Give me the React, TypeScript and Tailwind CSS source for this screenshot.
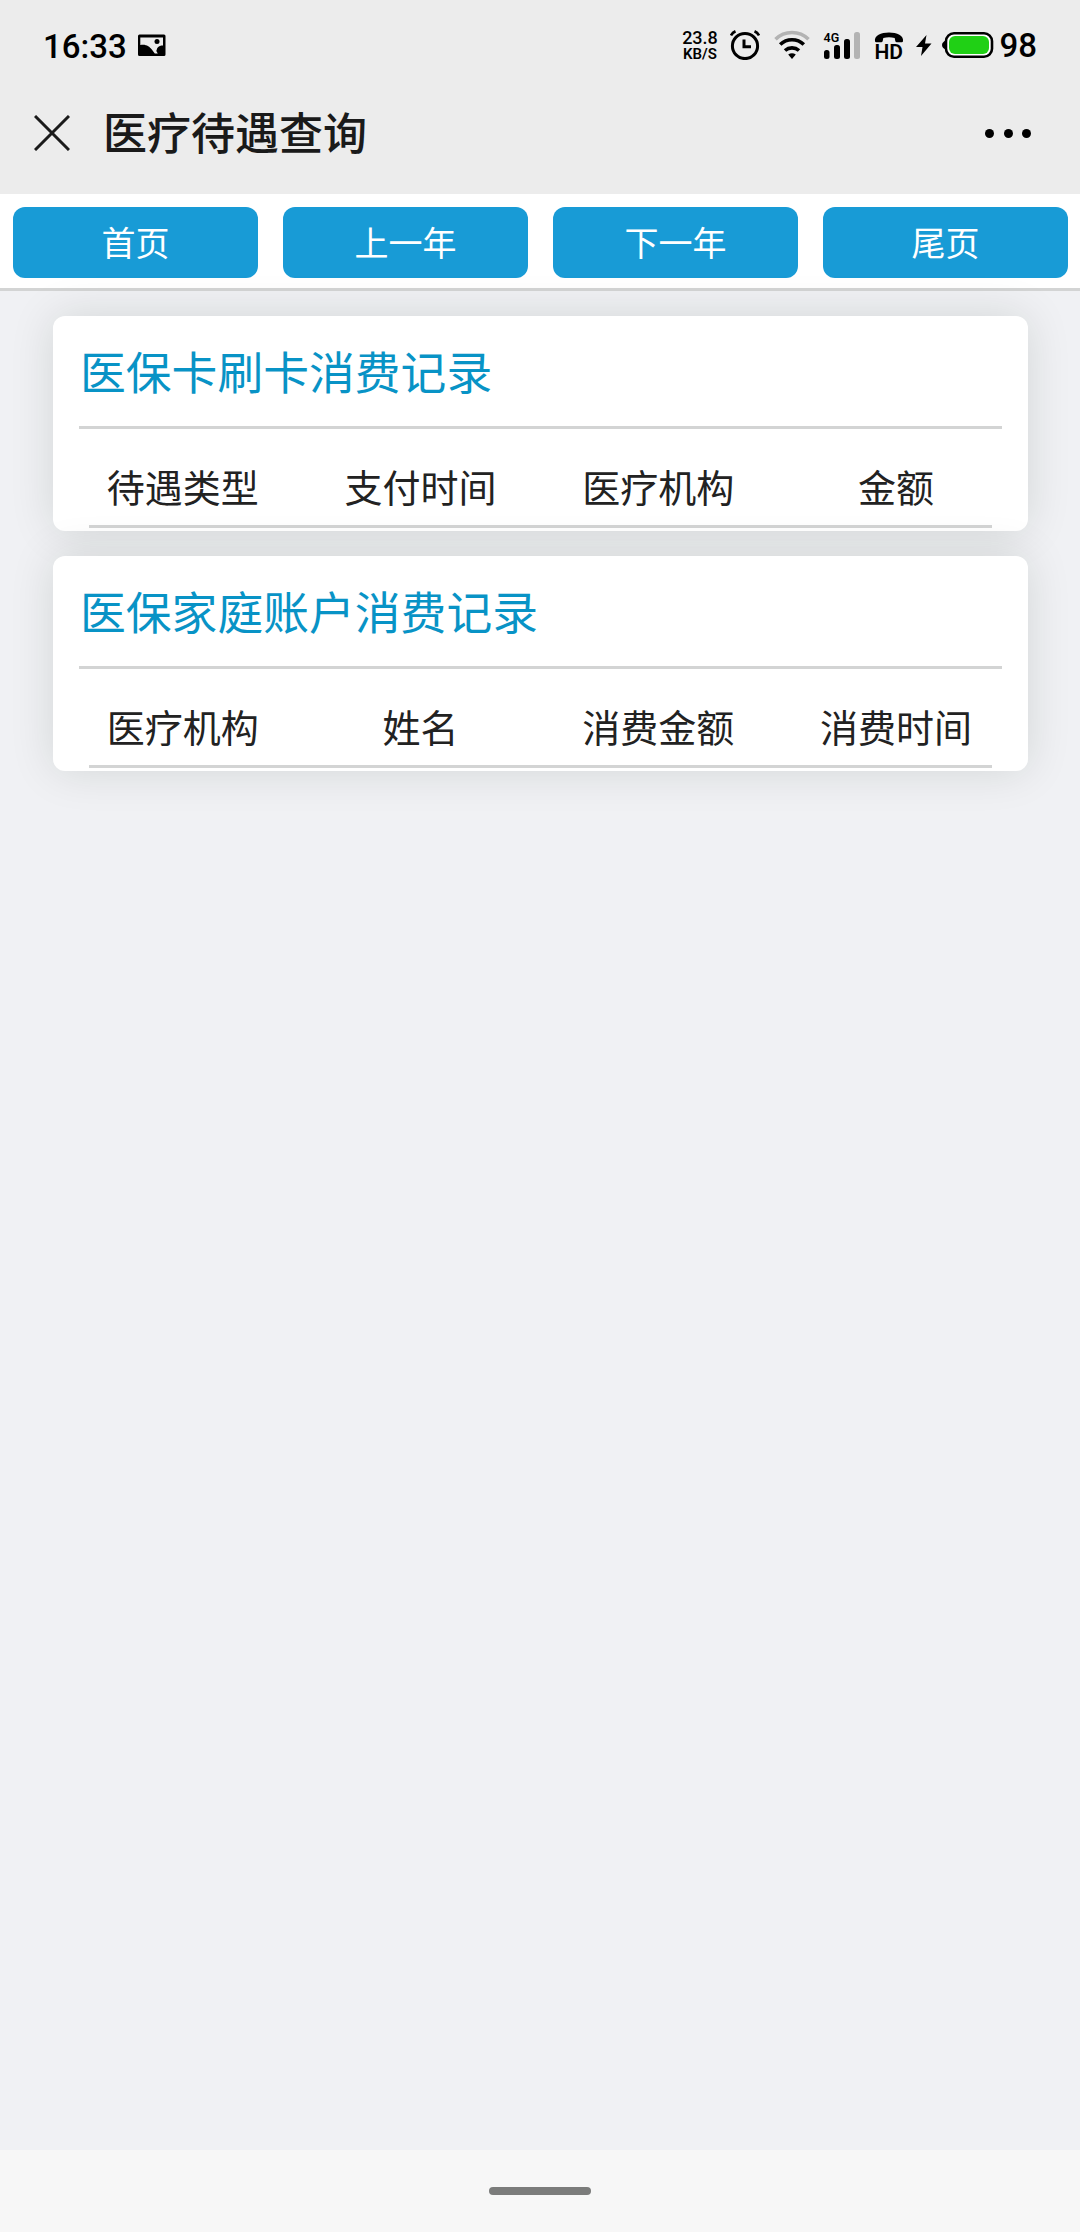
'use client';

interface RecordCardProps {
  title: string;
  columns: string[];
}

const navButtons = ['首页', '上一年', '下一年', '尾页'];

const records: RecordCardProps[] = [
  { title: '医保卡刷卡消费记录', columns: ['待遇类型', '支付时间', '医疗机构', '金额'] },
  { title: '医保家庭账户消费记录', columns: ['医疗机构', '姓名', '消费金额', '消费时间'] },
];

function StatusBar() {
  return (
    <div className="flex h-[90px] items-center justify-between pl-[43px] pr-[43px] font-['Roboto',sans-serif] text-black">
      <div className="flex items-center">
        <span className="w-[95px] pt-[3px] text-[33px] leading-[40px] font-medium">16:33</span>
        <svg width="28" height="23" viewBox="0 0 28 23" className="mt-px">
          <path
            fillRule="evenodd"
            d="M1.5 0.5h24.500a1.500 1.500 0 0 1 1.500 1.500v18.500a1.500 1.500 0 0 1-1.500 1.500h-24.500a1.500 1.500 0 0 1-1.500-1.500v-18.500a1.500 1.500 0 0 1 1.500-1.500zM2.300 3.500v7.500c6-1 9 1.500 11.500 4.500l3 4h3l-1.500-2.500 1-3c1.500-2 3.500-2.500 5.700-2.500v-8z"
          />
          <circle cx="19" cy="7.500" r="2.500" />
        </svg>
      </div>

      <div className="flex items-center">
        <div className="flex w-[37px] flex-col items-center pt-px">
          <span className="text-[18px] leading-[18px] font-medium">23.8</span>
          <span className="text-[15px] leading-[15px] font-semibold whitespace-nowrap">KB/S</span>
        </div>

        {/* Alarm */}
        <svg width="30" height="30" viewBox="0 0 30 30" className="ml-[12px]" fill="none" stroke="#000">
          <circle cx="15" cy="16" r="12.600" strokeWidth="3" />
          <path d="M14 9.500v7.200h7" strokeWidth="3" />
          <path d="M1 5.500q1.500-3 4.500-4.300M29 5.500q-1.500-3-4.500-4.300" strokeWidth="2.600" />
        </svg>

        {/* Wifi */}
        <svg width="36" height="30" viewBox="0 0 36 30" className="ml-[14px]" fill="none" stroke="#000" strokeWidth="3.600">
          <path d="M1.500 9.300a23.500 23.500 0 0 1 33 0" stroke="#b3b3b3" />
          <path d="M6.200 14.500a17 17 0 0 1 23.600 0" />
          <path d="M11 20.500a10.500 10.500 0 0 1 14 0" />
          <path d="M18 29l-3.800-4.500q3.800-2.600 7.600 0z" fill="#000" stroke="none" />
        </svg>

        {/* Signal */}
        <div className="relative ml-[13px] h-[30px] w-[38px]">
          <span className="absolute top-px left-0 text-[12.5px] leading-[14px] font-semibold">4G</span>
          <svg width="38" height="30" viewBox="0 0 38 30">
            <rect x="1" y="20" width="5.500" height="9" rx="2.500" />
            <rect x="11" y="15" width="6" height="14" rx="2.500" />
            <rect x="21" y="9" width="6" height="20" rx="2.500" />
            <rect x="31" y="2" width="6" height="27" rx="2.500" fill="#b3b3b3" />
          </svg>
        </div>

        {/* HD call */}
        <div className="relative ml-[13px] h-[30px] w-[30px]">
          <svg width="30" height="12" viewBox="0 0 30 12" className="absolute top-[2px] left-0">
            <path d="M1 9.200C0 3.500 7 0.500 15 0.500s15 3 14 8.700q-.2 1-1.200 1h-5q-1.200 0-1.500-1.200l-.6-3q-5.700-1.500-11.400 0l-.6 3q-.3 1.200-1.500 1.200h-5q-1 0-1.200-1z" />
          </svg>
          <span className="absolute top-[12px] left-0 text-[21px] leading-[20px] font-semibold">HD</span>
        </div>

        {/* Charging bolt */}
        <svg width="16" height="21" viewBox="0 0 16 21" className="ml-[12px]">
          <path d="M10.500 0L0 12h6.500l-1.500 9L15.500 8.500H9z" />
        </svg>

        {/* Battery */}
        <svg width="52" height="26" viewBox="0 0 52 26" className="ml-[10px]">
          <path d="M4 8.500Q0 10 0 13t4 4.500z" />
          <rect x="4" y="1.300" width="46" height="23.400" rx="8" fill="#fff" stroke="#000" strokeWidth="2.600" />
          <rect x="7" y="4" width="40" height="18" rx="6" fill="#20d015" />
        </svg>
        <span className="ml-[5px] pt-[2px] text-[33px] leading-[40px] font-medium">98</span>
      </div>
    </div>
  );
}

function TitleBar() {
  return (
    <div className="flex h-[104px] items-center pb-[18px] pl-[34px] pr-[49px]">
      <svg width="36" height="36" viewBox="0 0 36 36" stroke="#1a1a1a" strokeWidth="3" fill="none">
        <path d="M1 1l34 34M35 1L1 35" />
      </svg>
      <h1 className="ml-[33px] flex-1 pb-[4px] text-[44px] leading-[60px] font-medium text-[#1a1a1a]">医疗待遇查询</h1>
      <div className="flex gap-[9.5px]">
        <span className="size-[9px] rounded-full bg-black" />
        <span className="size-[9px] rounded-full bg-black" />
        <span className="size-[9px] rounded-full bg-black" />
      </div>
    </div>
  );
}

function RecordCard({ title, columns }: RecordCardProps) {
  return (
    <section className="relative h-[215px] rounded-[12px] bg-white px-[26px] shadow-[0_0_45px_rgba(20,30,0,0.12)]">
      <h2 className="h-[113px] border-b-[3px] border-[#d3d4d4] pt-[20px] pl-px text-[45.8px] leading-[68px] text-[#0893c6]">
        {title}
      </h2>
      <div className="mx-[10px] h-[99px] border-b-[3px] border-[#d3d4d4]">
        <div className="-mr-[23px] -ml-[25px] grid grid-cols-4 pt-[29px] text-center text-[38px] leading-[56px] text-[#222]">
          {columns.map((column) => (
            <span key={column}>{column}</span>
          ))}
        </div>
      </div>
    </section>
  );
}

export default function App() {
  return (
    <div className="flex h-[2232px] w-[1080px] flex-col overflow-hidden bg-[#f0f1f4] font-['Noto_Sans_CJK_SC',sans-serif]">
      <header className="bg-[#ececec]">
        <StatusBar />
        <TitleBar />
      </header>

      {/* Year navigation */}
      <nav className="grid h-[97px] grid-cols-4 border-b-[3px] border-[#d3d4d4] bg-white pt-[13px]">
        {navButtons.map((label) => (
          <button
            key={label}
            className="mr-[12px] ml-[13px] h-[71px] rounded-[12px] bg-[#189bd6] pb-[3px] text-[34px] leading-[67px] text-white"
          >
            {label}
          </button>
        ))}
      </nav>

      <main className="flex flex-1 flex-col gap-[25px] pt-[25px] pr-[52px] pl-[53px]">
        {records.map((record) => (
          <RecordCard key={record.title} {...record} />
        ))}
      </main>

      {/* Gesture bar */}
      <footer className="flex h-[82px] justify-center bg-[#f7f7f7] pt-[37px]">
        <div className="h-[8px] w-[102px] rounded-full bg-[#7b7c7b]" />
      </footer>
    </div>
  );
}
